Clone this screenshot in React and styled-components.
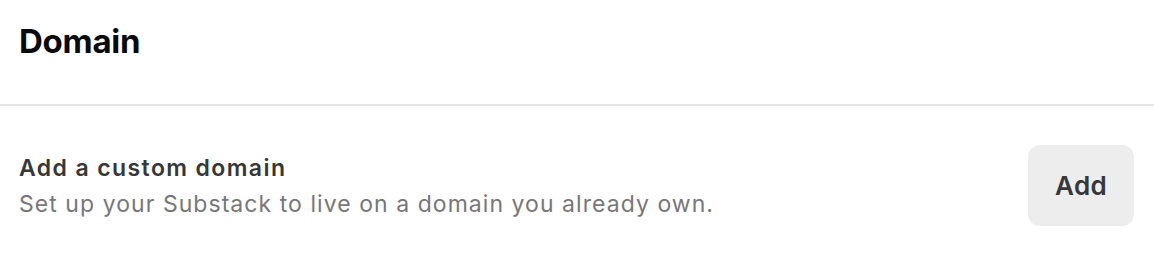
import styled, { createGlobalStyle } from 'styled-components'

const GlobalStyle = createGlobalStyle`
    body {
        margin: 0;
        background: #fff;
        font-family: Inter, "Noto Sans", sans-serif;
        -webkit-font-smoothing: antialiased;
    }
`

const Page = styled.div`
    width: 100%;
`

const Header = styled.div`
    height: 106px;
    padding: 21px 19px 0;
    box-sizing: border-box;
    border-bottom: 2px solid #e6e6e6;
    h1 {
        margin: 0;
        font-size: 33px;
        line-height: 40px;
        font-weight: 700;
        color: #0a0a0a;
        letter-spacing: -0.25px;
    }
`

const Row = styled.div`
    display: flex;
    align-items: center;
    justify-content: space-between;
    padding: 39px 20px 40px 19px;
`

const Info = styled.div`
    display: flex;
    flex-direction: column;
    gap: 8px;
`

const Title = styled.div`
    font-size: 23px;
    line-height: 28px;
    font-weight: 600;
    color: #363737;
    letter-spacing: 1.4px;
`

const Desc = styled.div`
    font-size: 23px;
    line-height: 28px;
    color: #777;
    letter-spacing: 1.05px;
`

const Button = styled.button`
    width: 106px;
    height: 81px;
    border: none;
    border-radius: 12px;
    background: #ededed;
    color: #363737;
    font-family: inherit;
    font-size: 26px;
    font-weight: 600;
    letter-spacing: 0.3px;
`

const App = () => {
    return (
        <Page>
            <GlobalStyle />
            <Header>
                <h1>Domain</h1>
            </Header>
            <Row>
                <Info>
                    <Title>Add a custom domain</Title>
                    <Desc>Set up your Substack to live on a domain you already own.</Desc>
                </Info>
                <Button>Add</Button>
            </Row>
        </Page>
    )
}

export default App
